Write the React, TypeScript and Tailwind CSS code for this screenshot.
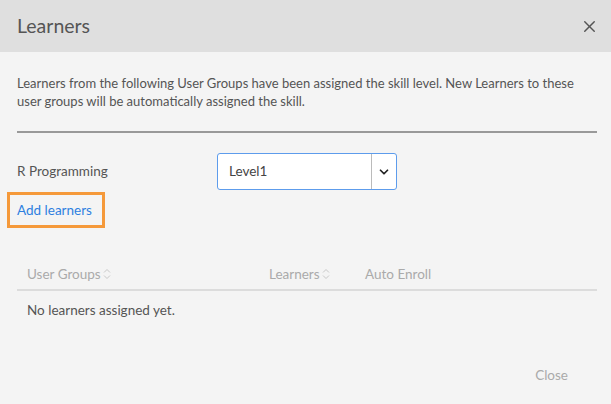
import { ChevronDown, X } from "lucide-react";

function SortIcon() {
  return (
    <svg width="8" height="14" viewBox="0 0 8 14" fill="none" stroke="#c8c8c8" strokeWidth="1" className="ml-0.5">
      <path d="M1 5.5 L4 2.5 L7 5.5" />
      <path d="M1 8.5 L4 11.5 L7 8.5" />
    </svg>
  );
}

export default function App() {
  return (
    <div className="w-[611px] h-[404px] bg-[#f4f4f4] font-['Lato',sans-serif] text-[#444] flex flex-col overflow-hidden">
      <div className="h-[52px] shrink-0 bg-[#dfdfdf] flex items-center justify-between pl-[17px] pr-[12px]">
        <h1 className="text-[19.5px] text-[#555] font-normal">Learners</h1>
        <X className="w-[19px] h-[19px] text-[#555]" strokeWidth={1.8} />
      </div>

      <div className="px-[17px] pt-[22px]">
        <p className="text-[13px] leading-[18px] text-[#555]">
          Learners from the following User Groups have been assigned the skill level. New Learners to these user groups will be automatically assigned the skill.
        </p>
        <div className="mt-[21px] h-[2px] bg-[#999] mr-[-3px]" />

        <div className="mt-[20px] flex items-center">
          <span className="w-[200px] text-[13.5px] text-[#555]">R Programming</span>
          <div className="w-[180px] h-[37px] bg-white border border-[#5d9cec] rounded-[3px] flex items-center">
            <span className="flex-1 pl-[11px] text-[13.5px] text-[#444]">Level1</span>
            <div className="w-[25px] h-full border-l border-[#bbb] flex items-center justify-center">
              <ChevronDown className="w-[14px] h-[14px] text-[#222]" strokeWidth={3} />
            </div>
          </div>
        </div>

        <div className="mt-[2px] ml-[-10px] w-[98px] h-[36px] border-[3px] border-[#f5993a] flex items-center pl-[7px]">
          <a className="text-[13.5px] text-[#2e7fe0]">Add learners</a>
        </div>

        <div className="mt-[36px] flex items-center text-[13.5px] text-[#aaa] pl-[10px] pb-[5px]">
          <div className="w-[242px] flex items-center">User Groups<SortIcon /></div>
          <div className="w-[96px] flex items-center">Learners<SortIcon /></div>
          <div>Auto Enroll</div>
        </div>
        <div className="h-[2px] bg-[#dcdcdc] mr-[-3px]" />
        <div className="pl-[10px] pt-[9px] text-[13.5px] text-[#555]">No learners assigned yet.</div>
      </div>

      <div className="mt-auto mb-[19px] flex justify-end pr-[43px]">
        <span className="text-[13.5px] text-[#aaa]">Close</span>
      </div>
    </div>
  );
}
